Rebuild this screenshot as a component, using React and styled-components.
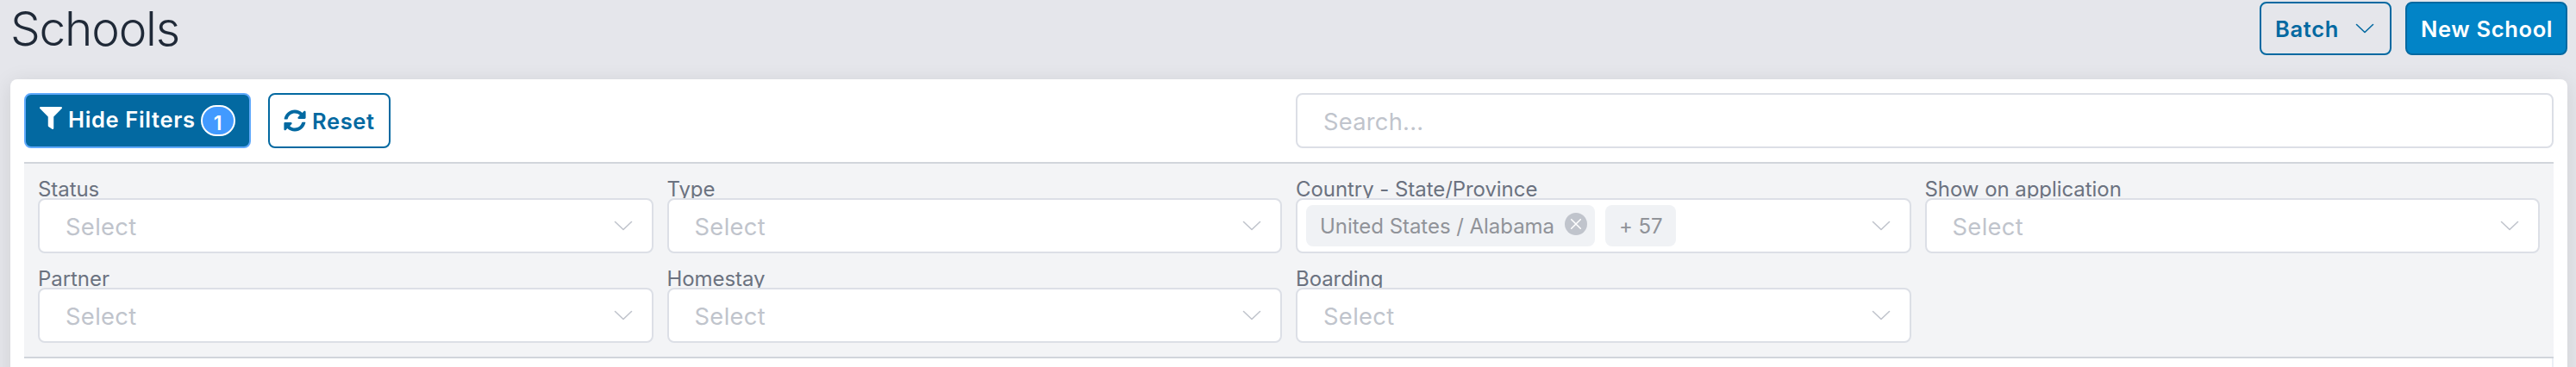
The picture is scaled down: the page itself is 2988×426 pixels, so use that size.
import styled, { createGlobalStyle, css } from "styled-components";
import { FaFilter, FaSyncAlt } from "react-icons/fa";

const GlobalStyle = createGlobalStyle`
  * {
    box-sizing: border-box;
  }

  body {
    margin: 0;
    background: #e5e6eb;
    font-family: Inter, "Liberation Sans", sans-serif;
    overflow: hidden;
  }
`;

const Page = styled.main`
  height: 426px;
  padding: 0 10px 0 12px;
  display: flex;
  flex-direction: column;
  overflow: hidden;
`;

const Header = styled.header`
  height: 92px;
  flex-shrink: 0;
  display: flex;
  justify-content: space-between;
  align-items: flex-start;
`;

const Title = styled.h1`
  margin: 0;
  font-size: 55px;
  line-height: 66px;
  font-weight: 300;
  letter-spacing: -1.2px;
  color: #1f2937;
`;

const Actions = styled.div`
  display: flex;
  gap: 16px;
  padding-top: 2px;
`;

const variants = {
  plain: css`
    color: #0369a1;
    background: transparent;
    border-color: #0369a1;
  `,
  primary: css`
    color: #fff;
    background: #0284c7;
    border-color: #0369a1;
  `,
  active: css`
    color: #fff;
    background: #0369a1;
    border-color: #60a9fb;
  `,
};

const Button = styled.button`
  width: ${(p) => p.$width}px;
  height: ${(p) => p.$height || 64}px;
  padding: 0 16px;
  display: flex;
  align-items: center;
  border: 2px solid;
  border-radius: 8px;
  font-family: inherit;
  font-size: 25.5px;
  line-height: 32px;
  font-weight: 600;
  letter-spacing: 0.65px;
  white-space: nowrap;
  ${(p) => variants[p.$variant || "plain"]}

  svg {
    flex-shrink: 0;
  }
`;

const ButtonText = styled.span`
  padding-top: 2px;
  padding-bottom: ${(p) => p.$lift || 0}px;
`;

const Badge = styled.span`
  width: 40px;
  height: 36px;
  margin-left: 6px;
  padding-top: 6px;
  display: flex;
  justify-content: center;
  align-items: center;
  border: 2px solid #fff;
  border-radius: 18px;
  background: #429aff;
  font-size: 23px;
  line-height: 28px;
  letter-spacing: 0;
`;

const Card = styled.section`
  height: 500px;
  flex-shrink: 0;
  padding: 16px;
  border-radius: 8px;
  background: #fff;
  box-shadow: 0 4px 24px rgba(0, 0, 0, 0.1);
`;

const Toolbar = styled.div`
  display: grid;
  grid-template-columns: 1fr 1459px;
  margin-bottom: 16px;
`;

const ToolbarButtons = styled.div`
  display: flex;
  gap: 20px;
`;

const SearchInput = styled.input`
  width: 100%;
  height: 64px;
  padding: 2px 29px 0 30px;
  border: 2px solid #dcdfe6;
  border-radius: 8px;
  background: #fff;
  font-family: inherit;
  font-size: 27.3px;
  letter-spacing: 0.25px;

  &::placeholder {
    color: #c0c4cc;
    opacity: 1;
  }
`;

const Filters = styled.div`
  height: 228px;
  padding: 12px 16px 0;
  display: grid;
  grid-template-columns: repeat(4, 1fr);
  grid-auto-rows: 92px;
  gap: 12px 16px;
  border-top: 2px solid #d1d5db;
  border-bottom: 2px solid #d1d5db;
  background: #f3f4f6;
`;

const Field = styled.div`
  display: flex;
  flex-direction: column;
`;

const Label = styled.label`
  height: 28px;
  padding-top: 2px;
  font-size: 24px;
  line-height: 32px;
  letter-spacing: -0.06px;
  color: #6b7280;
`;

/* sits above the label so its descenders stay under the box */
const SelectBox = styled.div`
  position: relative;
  height: 64px;
  padding: 0 22px 0 ${(p) => (p.$tags ? 10 : 30)}px;
  display: flex;
  align-items: center;
  justify-content: space-between;
  border: 2px solid #dcdfe6;
  border-radius: 8px;
  background: #fff;
`;

const Placeholder = styled.span`
  padding-top: 2px;
  font-size: 27.3px;
  letter-spacing: 0.35px;
  color: #c0c4cc;
`;

const Tags = styled.div`
  display: flex;
  gap: 12px;
`;

const Tag = styled.span`
  height: 48px;
  padding: 1px ${(p) => (p.$closable ? 9 : 15)}px 0 16px;
  display: flex;
  align-items: center;
  gap: 12px;
  border-radius: 8px;
  background: #f0f2f5;
  font-size: 24px;
  letter-spacing: -0.04px;
  color: #909399;

  svg {
    margin-bottom: 5px;
  }
`;

const Table = styled.div`
  height: 120px;
  border-right: 2px solid #ebeef5;
`;

const Chevron = ({ color = "#c0c4cc" }) => (
  <svg width="22" height="22" viewBox="0 0 22 22" fill="none">
    <path d="M1.5 6.5 11 15.5 20.5 6.5" stroke={color} strokeWidth="1.6" strokeLinecap="round" strokeLinejoin="round" />
  </svg>
);

const CloseIcon = () => (
  <svg width="26" height="26" viewBox="0 0 26 26">
    <circle cx="13" cy="13" r="13" fill="#c0c4cc" />
    <path d="M7.7 7.7 18.3 18.3M18.3 7.7 7.7 18.3" stroke="#fff" strokeWidth="1.5" strokeLinecap="round" />
  </svg>
);

const fields = [
  { label: "Status" },
  { label: "Type" },
  { label: "Country - State/Province", tag: "United States / Alabama", more: 57 },
  { label: "Show on application" },
  { label: "Partner" },
  { label: "Homestay" },
  { label: "Boarding" },
];

const FilterField = ({ label, tag, more }) => (
  <Field>
    <Label>{label}</Label>
    <SelectBox $tags={!!tag}>
      {tag ? (
        <Tags>
          <Tag $closable>
            {tag}
            <CloseIcon />
          </Tag>
          <Tag>{`+ ${more}`}</Tag>
        </Tags>
      ) : (
        <Placeholder>Select</Placeholder>
      )}
      <Chevron />
    </SelectBox>
  </Field>
);

const BatchButton = styled(Button)`
  justify-content: space-between;
  padding-right: 18px;
`;

const FilterIcon = styled(FaFilter)`
  margin: 0 7px 6px 0;
`;

const ResetIcon = styled(FaSyncAlt)`
  margin-right: 7px;
`;

const App = () => {
  return (
    <>
      <GlobalStyle />
      <Page>
        <Header>
          <Title>Schools</Title>
          <Actions>
            <BatchButton $width={153} $height={62}>
              <ButtonText>Batch</ButtonText>
              <Chevron color="#0369a1" />
            </BatchButton>
            <Button $variant="primary" $width={188} $height={62}>
              <ButtonText>New School</ButtonText>
            </Button>
          </Actions>
        </Header>
        <Card>
          <Toolbar>
            <ToolbarButtons>
              <Button $variant="active" $width={263}>
                <FilterIcon size={26} />
                <ButtonText $lift={5}>Hide Filters</ButtonText>
                <Badge>1</Badge>
              </Button>
              <Button $width={142}>
                <ResetIcon size={26} />
                <ButtonText>Reset</ButtonText>
              </Button>
            </ToolbarButtons>
            <SearchInput placeholder="Search..." />
          </Toolbar>
          <Filters>
            {fields.map((field) => (
              <FilterField key={field.label} {...field} />
            ))}
          </Filters>
          <Table />
        </Card>
      </Page>
    </>
  );
};

export default App;
